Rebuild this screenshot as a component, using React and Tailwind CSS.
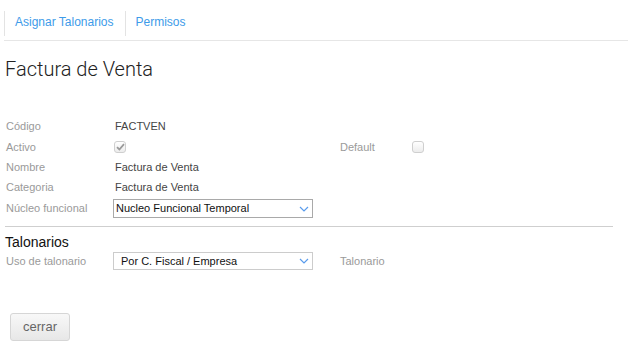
import React from 'react';

const Chevron = () => (
  <svg width="10" height="6" viewBox="0 0 10 6" className="shrink-0">
    <path d="M1 1 L5 5 L9 1" fill="none" stroke="#5a9cec" strokeWidth="1.2" />
  </svg>
);

const Checkbox = ({ checked }) => (
  <div className="w-[12px] h-[12px] rounded-[3px] border border-[#cfcfcf] bg-gradient-to-b from-white to-[#ececec] flex items-center justify-center">
    {checked && (
      <svg width="9" height="8" viewBox="0 0 9 8">
        <path d="M1 4.2 L3.4 6.5 L8 1.2" fill="none" stroke="#9a9a9a" strokeWidth="1.8" />
      </svg>
    )}
  </div>
);

const Select = ({ value, dark, padLeft }) => (
  <div
    className={`w-[200px] flex items-center justify-between border bg-white pr-[3px] ${
      dark ? 'h-[19px] border-[#a9a9a9]' : 'h-[18px] border-[#cccccc]'
    } ${padLeft ? 'pl-[7px]' : 'pl-[2px]'}`}
  >
    <span className="text-[11px] leading-none text-[#111]">{value}</span>
    <Chevron />
  </div>
);

const Row = ({ label, height, children, extra }) => (
  <div className={`flex items-center ${height}`}>
    <div className="w-[108px] pl-[1px] text-[11px] text-[#9a9a9a]">{label}</div>
    <div className="w-[227px] flex items-center">{children}</div>
    {extra}
  </div>
);

export default function App() {
  return (
    <div className="w-[628px] h-[357px] bg-white font-['Liberation_Sans',Arial,sans-serif] overflow-hidden">
      {/* Tabs */}
      <div className="ml-[4px] mt-[11px] pb-[4px] border-b border-[#e6e6e6] flex">
        <div className="h-[25px] pt-[3px] border-l border-[#e3e3e3] pl-[10px] pr-[11px] text-[12px] leading-4 text-[#3d9be9]">
          Asignar Talonarios
        </div>
        <div className="h-[25px] pt-[3px] border-l border-[#e3e3e3] px-[10px] text-[12px] leading-4 text-[#3d9be9]">
          Permisos
        </div>
      </div>

      <div className="pl-[5px]">
        <h1 className="mt-[16px] font-['Roboto',sans-serif] font-light text-[20px] leading-6 text-[#222]">
          Factura de Venta
        </h1>

        <div className="mt-[35px]">
          <Row label="Código" height="h-[21px]">
            <span className="pl-[2px] text-[11px] text-[#444]">FACTVEN</span>
          </Row>
          <Row
            label="Activo"
            height="h-5"
            extra={
              <div className="flex items-center">
                <div className="w-[72px] text-[11px] text-[#9a9a9a]">Default</div>
                <Checkbox />
              </div>
            }
          >
            <div className="pl-[1px]">
              <Checkbox checked />
            </div>
          </Row>
          <Row label="Nombre" height="h-5">
            <span className="pl-[2px] text-[11px] text-[#444]">Factura de Venta</span>
          </Row>
          <Row label="Categoria" height="h-[21px]">
            <span className="pl-[2px] text-[11px] text-[#444]">Factura de Venta</span>
          </Row>
          <Row label="Núcleo funcional" height="h-[21px]">
            <Select value="Nucleo Funcional Temporal" dark />
          </Row>
        </div>

        <div className="mt-[7px] w-[608px] border-t border-[#cfcfcf]" />

        <h2 className="mt-[7px] text-[14px] leading-4 text-[#111]">Talonarios</h2>

        <div className="mt-[1px]">
          <Row
            label="Uso de talonario"
            height="h-5"
            extra={<div className="text-[11px] text-[#9a9a9a]">Talonario</div>}
          >
            <Select value="Por C. Fiscal / Empresa" padLeft />
          </Row>
        </div>

        <button className="mt-[42px] ml-[5px] w-[60px] h-[28px] rounded-[3px] border border-[#d6d6d6] bg-gradient-to-b from-[#f8f8f8] to-[#e7e7e7] text-[13px] text-[#666]">
          cerrar
        </button>
      </div>
    </div>
  );
}
